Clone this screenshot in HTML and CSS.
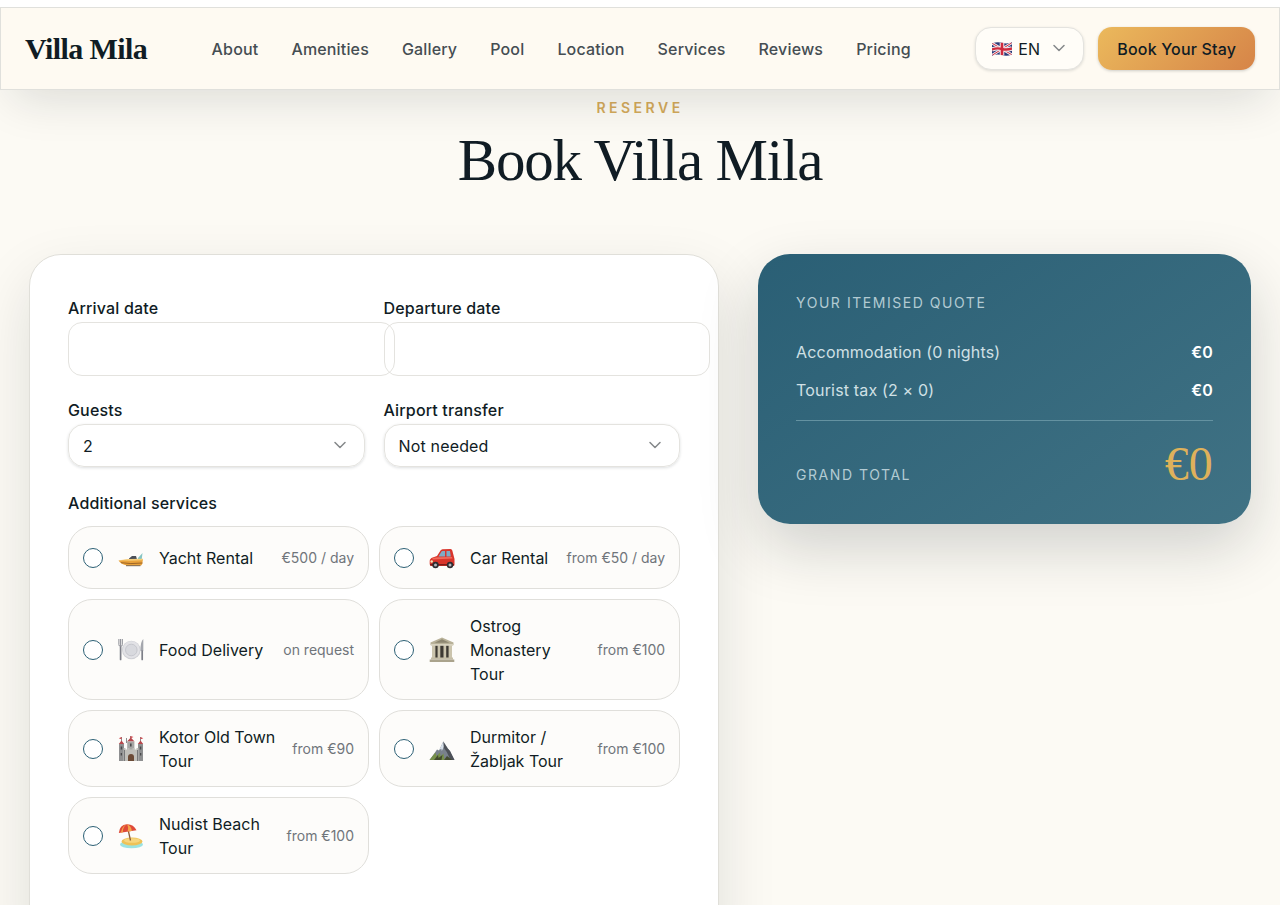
FILE: index.html
```html
<!DOCTYPE html>
<html lang="en">
<head>
  <meta charset="UTF-8">
  <meta name="viewport" content="width=device-width, initial-scale=1.0">
  <title>Book Villa Mila</title>
  <link rel="stylesheet" href="styles.css">
</head>
<body>

  <header class="topbar">
    <a class="logo" href="#">Villa Mila</a>
    <nav class="nav" aria-label="Main">
      <a href="#about">About</a>
      <a href="#amenities">Amenities</a>
      <a href="#gallery">Gallery</a>
      <a href="#pool">Pool</a>
      <a href="#location">Location</a>
      <a href="#services">Services</a>
      <a href="#reviews">Reviews</a>
      <a href="#pricing">Pricing</a>
    </nav>
    <div class="actions">
      <div class="lang">
        <svg class="flag" viewBox="0 0 20 14" aria-hidden="true">
          <path fill="#2b3a78" d="M0 1.5Q5-.6 10 .8T20 .3V12.500Q15 14.500 10 13.100T0 13.700Z"/>
          <path stroke="#f3eef0" stroke-width="2.600" d="M.5 1.500 19.500 12.500M19.500 1 .5 13"/>
          <path stroke="#cf2b3e" stroke-width="1" d="M.5 1.500 19.500 12.500M19.500 1 .5 13"/>
          <path stroke="#f3eef0" stroke-width="4.600" d="M10 .8V13.100"/>
          <path fill="none" stroke="#f3eef0" stroke-width="4.400" d="M0 7.500Q5 5.600 10 7T20 6.400"/>
          <path stroke="#cf2b3e" stroke-width="2.600" d="M10 .8V13.100"/>
          <path fill="none" stroke="#cf2b3e" stroke-width="2.400" d="M0 7.500Q5 5.600 10 7T20 6.400"/>
        </svg>
        <select id="lang" aria-label="Language">
          <option>EN</option>
        </select>
        <svg class="chevron" viewBox="0 0 12 12" aria-hidden="true"><path d="M1 3.500 6 8.500 11 3.500"/></svg>
      </div>
      <button type="button" class="book">Book Your Stay</button>
    </div>
  </header>

  <main>
    <div class="heading">
      <p class="eyebrow">Reserve</p>
      <h1>Book Villa Mila</h1>
    </div>

    <div class="booking">
      <form class="form-card">
        <div class="fields">
          <div class="field">
            <label for="arrival">Arrival date</label>
            <input type="text" id="arrival" class="date">
          </div>
          <div class="field">
            <label for="departure">Departure date</label>
            <input type="text" id="departure" class="date">
          </div>
          <div class="field">
            <label for="guests">Guests</label>
            <div class="select">
              <select id="guests">
                <option>2</option>
              </select>
              <svg class="chevron" viewBox="0 0 12 12" aria-hidden="true"><path d="M1 3.500 6 8.500 11 3.500"/></svg>
            </div>
          </div>
          <div class="field">
            <label for="transfer">Airport transfer</label>
            <div class="select">
              <select id="transfer">
                <option>Not needed</option>
              </select>
              <svg class="chevron" viewBox="0 0 12 12" aria-hidden="true"><path d="M1 3.500 6 8.500 11 3.500"/></svg>
            </div>
          </div>
        </div>

        <fieldset class="services">
          <legend>Additional services</legend>
          <div class="service-grid">
            <label class="service">
              <input type="checkbox" name="yacht">
              <svg class="icon" viewBox="0 0 26 26" aria-hidden="true">
                <path fill="#4c5058" d="M11 13.500 14 11h4l1 3.500h-8z"/>
                <path fill="#86c5c4" d="m20 13 4.500-5-.8 6.500h-4z"/>
                <path fill="#e9a23b" d="M.5 15.500 12 14.300l13-.3-.8 5q-.4 1.500-2 1.500H9Q3 19.500.5 15.500z"/>
                <path fill="#f6cd78" d="M.5 15.300 12 14l13-.2-.2 1.500-12.800.5z"/>
                <path fill="none" stroke="#8a5420" stroke-width=".8" d="M3 17.700q9 1.600 21.500.3"/>
                <path fill="none" stroke="#5c4530" stroke-width=".8" d="M8 20.700h14.500"/>
              </svg>
              <span class="name">Yacht Rental</span>
              <span class="price">€500 / day</span>
            </label>
            <label class="service">
              <input type="checkbox" name="car">
              <svg class="icon" viewBox="0 0 26 26" aria-hidden="true">
                <path fill="#d9352b" d="M8 11 11.500 5.500q.7-1 2-1.200L21.500 4q1.500 0 1.800 1.500L25.500 14v5.500q0 1.500-1.500 1.500H2.500Q.7 21 .7 19v-3q0-2.500 3-3.500z"/>
                <path fill="#7faac4" d="M9.500 11.500 12.500 6.500q.3-.5 1-.5H16v5.500zM17.500 6h3.500l.8 5.500h-4.300z"/>
                <path fill="#f1695a" d="M3.500 13 9 12.200l14-.2.500 1.500-20 1z"/>
                <circle cx="2.700" cy="16.500" r="1.200" fill="#f5e9b8"/>
                <path fill="#7e1c19" d="M1 19h24v1.500H1z"/>
                <circle cx="6.500" cy="20" r="3.200" fill="#2d2d31"/>
                <circle cx="6.500" cy="20" r="1.500" fill="#b4b6bb"/>
                <circle cx="21" cy="20" r="3.200" fill="#2d2d31"/>
                <circle cx="21" cy="20" r="1.500" fill="#b4b6bb"/>
              </svg>
              <span class="name">Car Rental</span>
              <span class="price">from €50 / day</span>
            </label>
            <label class="service">
              <input type="checkbox" name="food">
              <svg class="icon" viewBox="0 0 26 26" aria-hidden="true">
                <circle cx="13.300" cy="13" r="9.300" fill="#cfd0d5"/>
                <circle cx="13.300" cy="12.700" r="8.500" fill="#e2e2e6"/>
                <circle cx="13.300" cy="13" r="5.800" fill="#d8d9de" stroke="#bcbdc4" stroke-width=".7"/>
                <path fill="none" stroke="#898b93" stroke-width="1" d="M.9 2v5.500q0 2 1.700 2t1.700-2V2M2.600 2v8"/>
                <path stroke="#7d7f88" stroke-width="1.700" stroke-linecap="round" d="M2.600 10.500V22.500"/>
                <path fill="#a4a6ad" d="M25.300 2q-3 2.500-2.800 12h2.800z"/>
                <path stroke="#7d7f88" stroke-width="1.700" stroke-linecap="round" d="M24.200 14v8.500"/>
              </svg>
              <span class="name">Food Delivery</span>
              <span class="price">on request</span>
            </label>
            <label class="service">
              <input type="checkbox" name="ostrog">
              <svg class="icon" viewBox="0 0 26 26" aria-hidden="true">
                <path fill="#b8b198" d="M1.500 5.500 13 .5l11.500 5v2.500h-23z"/>
                <path fill="#8d8670" d="M5.500 5.700 13 2.300l7.500 3.400z"/>
                <path fill="#3d3932" d="M4 8h18v13H4z"/>
                <path fill="#cbc4ad" d="M3 8h3.400v13H3zM8.600 8h2.700v13H8.600zM14.500 8h2.700v13h-2.700zM19.600 8H23v13h-3.400z"/>
                <path fill="#d8d2bf" d="M1.800 7h22.400v1.800H1.800z"/>
                <path fill="#c4bda6" d="M2 20.500h22v2H2z"/>
                <path fill="#aaa38c" d="M.7 22.500h24.600V25H.7z"/>
              </svg>
              <span class="name">Ostrog Monastery Tour</span>
              <span class="price">from €100</span>
            </label>
            <label class="service">
              <input type="checkbox" name="kotor">
              <svg class="icon" viewBox="0 0 26 26" aria-hidden="true">
                <path stroke="#5d5d60" stroke-width=".7" d="M3.500 1v6M8.500 2v5M12.500 0v5M22.500 1v6"/>
                <path fill="#cf3f45" d="M3.500 1 .8 2.300l2.700 1zM12.500 0l3 1-3 1.200zM22.500 1l2.800 1.300-2.800 1z"/>
                <path fill="#b7474c" d="m.8 8 2.700-3.500L6.200 8zM9 5.500 12.800 1.500 16.500 5.500zM19.800 8l2.700-3.500L25.200 8z"/>
                <path fill="#a6a6a4" d="M9.200 5.500h7.200V16H9.200z"/>
                <path fill="#8e8f90" d="M1 8h5v17H1zM20 8h5v17h-5z"/>
                <path fill="#c0bfba" d="M5.500 12h2v1.500h2V12h2v1.500h3V12h2v1.500h2V12h2v13h-15z"/>
                <path fill="#4a4a4c" d="M2.700 10.500h1.500v3H2.700zM21.800 10.500h1.500v3h-1.500zM12 7.500h1.600v3H12zM2.700 17h1.300v2.500H2.700zM22 17h1.300v2.500H22z"/>
                <path fill="#6b4a36" d="M10 25v-4q0-3 3-3t3 3v4z"/>
                <path fill="#77787a" d="M6 14h1v11H6zM19 14h1v11h-1z"/>
              </svg>
              <span class="name">Kotor Old Town Tour</span>
              <span class="price">from €90</span>
            </label>
            <label class="service">
              <input type="checkbox" name="durmitor">
              <svg class="icon" viewBox="0 0 26 26" aria-hidden="true">
                <path fill="#79818c" d="M.5 24 6 16.500l2-3 2 1L14.300 5.500l4.500 7 2.200 2.500 4.500 9z"/>
                <path fill="#d7e0ea" d="m14.300 5.500-4 8.500 2-1.300.5 2.300 2-4 1.700 3 .8-1.500 2.500 2z"/>
                <path fill="#4d5158" d="m14.300 5.500.5 6.500 3 4 3.700 8h4L21 15l-2.200-2.500z"/>
                <path fill="#76904a" d="M.5 24 6.500 16.500l1 3.500 3.500-3.500.5 4 3-3 1 6.500z"/>
                <path fill="#434b2e" d="m5 24 4-5 .5 3 4-3-1 5zM15 24l3-4 5 4z"/>
              </svg>
              <span class="name">Durmitor / Žabljak Tour</span>
              <span class="price">from €100</span>
            </label>
            <label class="service">
              <input type="checkbox" name="beach">
              <svg class="icon" viewBox="0 0 26 26" aria-hidden="true">
                <ellipse cx="13.500" cy="21.500" rx="11.500" ry="3.800" fill="#9be3e2"/>
                <ellipse cx="14" cy="18.500" rx="10.500" ry="4" fill="#eec257"/>
                <ellipse cx="14" cy="17.500" rx="8" ry="2.300" fill="#f6d67f"/>
                <path stroke="#8f5c35" stroke-width="1.300" d="m9.500 4 3 13.500"/>
                <path fill="#df4a38" d="M.8 10Q1.500 2 8.800 1.300 15.500 1 18.500 7.300z"/>
                <path fill="#f3a54a" d="M4.800 9.300Q5 3.500 8.800 1.300q-4.500 1.200-6 8.400z"/>
                <path fill="#f3a54a" d="M9.500 8.600Q11 4 8.800 1.300 13.500 3 13.800 8z"/>
              </svg>
              <span class="name">Nudist Beach Tour</span>
              <span class="price">from €100</span>
            </label>
          </div>
        </fieldset>
      </form>

      <aside class="quote">
        <h2>Your itemised quote</h2>
        <dl>
          <div class="line">
            <dt>Accommodation (0 nights)</dt>
            <dd>€0</dd>
          </div>
          <div class="line">
            <dt>Tourist tax (2 × 0)</dt>
            <dd>€0</dd>
          </div>
          <div class="total">
            <dt>Grand total</dt>
            <dd>€0</dd>
          </div>
        </dl>
      </aside>
    </div>
  </main>

</body>
</html>
```
FILE: styles.css
```css
* {
  box-sizing: border-box;
}

body {
  margin: 0;
  border-top: 7px solid #fff;
  font-family: Inter, "Liberation Sans", sans-serif;
  font-size: 16px;
  line-height: 24px;
  letter-spacing: 0.01em;
  color: #101c24;
  background-color: #fcfaf4;
}

button, input, select {
  font: inherit;
  letter-spacing: inherit;
  color: inherit;
}

/* Header */
.topbar {
  position: sticky;
  top: 0;
  z-index: 10;
  display: flex;
  align-items: center;
  justify-content: space-between;
  height: 83px;
  padding: 0 24px;
  background-color: #fefaf2;
  border: 1px solid #e0e0dc;
  box-shadow: 0 20px 48px -12px rgba(16, 28, 36, 0.14);
}

.logo {
  font-family: "Liberation Serif", serif;
  font-size: 30px;
  font-weight: bold;
  letter-spacing: -0.02em;
  color: #101c24;
  text-decoration: none;
}

.nav {
  display: flex;
  gap: 33px;
}

.nav a {
  font-weight: 500;
  color: #454d52;
  text-decoration: none;
}

.actions {
  display: flex;
  gap: 14px;
}

.lang, .select {
  position: relative;
  border: 1px solid #e4e3df;
  border-radius: 16px;
  box-shadow: 0 1px 3px rgba(16, 28, 36, 0.14);
}

.lang {
  background-color: #fffdf8;
}

.lang select, .select select {
  display: block;
  width: 100%;
  height: 41px;
  padding: 0 40px 0 14px;
  appearance: none;
  background: none;
  border: none;
  border-radius: 16px;
}

.lang select {
  width: 107px;
  padding-left: 42px;
}

.flag {
  position: absolute;
  left: 16px;
  top: 14px;
  width: 20px;
  height: 14px;
}

.chevron {
  position: absolute;
  right: 18px;
  top: 14px;
  width: 12px;
  height: 12px;
  fill: none;
  stroke: #85888a;
  stroke-width: 1.5;
  stroke-linecap: round;
  stroke-linejoin: round;
  pointer-events: none;
}

.book {
  height: 43px;
  padding: 0 19px;
  font-weight: 500;
  border: none;
  border-radius: 14px;
  background: linear-gradient(135deg, #ebb95c, #d68448);
  box-shadow: 0 1px 3px rgba(16, 28, 36, 0.2);
  cursor: pointer;
}

/* Heading */
.heading {
  padding: 8px 30px 57px;
  text-align: center;
}

.eyebrow {
  margin: 0;
  font-size: 14px;
  line-height: 20px;
  font-weight: 600;
  letter-spacing: 0.25em;
  text-transform: uppercase;
  color: #d4a95a;
}

h1 {
  margin: 5px 0 0;
  font-family: "Liberation Serif", serif;
  font-size: 59px;
  line-height: 74px;
  font-weight: normal;
  letter-spacing: -0.02em;
}

/* Booking */
.booking {
  display: grid;
  grid-template-columns: 1.4fr 1fr;
  gap: 39px;
  align-items: start;
  padding: 0 29px 40px;
}

.form-card {
  padding: 41px 38px 80px;
  background-color: #fff;
  border: 1px solid #e0dfd9;
  border-radius: 32px;
  box-shadow: 0 24px 60px rgba(16, 28, 36, 0.12);
}

.fields {
  display: grid;
  grid-template-columns: 1fr 1fr;
  gap: 22px 19px;
}

.field label, .services legend {
  display: block;
  padding: 0 0 2px;
  font-weight: 500;
}

.date {
  display: block;
  width: calc(100% + 30px);
  height: 54px;
  padding: 0 15px;
  border: 1px solid #e4e3df;
  border-radius: 14px;
  background: none;
}

.services {
  min-width: 0;
  margin: 24px 0 0;
  padding: 0;
  border: none;
}

.services legend {
  padding-bottom: 11px;
}

.service-grid {
  display: grid;
  grid-template-columns: 1fr 1fr;
  gap: 10px;
}

.service {
  display: flex;
  align-items: center;
  gap: 15px;
  min-height: 63px;
  padding: 14px 14px 13px;
  letter-spacing: 0;
  background-color: #fdfcfa;
  border: 1px solid #e0dfdb;
  border-radius: 24px;
  cursor: pointer;
}

.service input {
  flex: none;
  width: 20px;
  height: 20px;
  margin: 0;
  appearance: none;
  background-color: #fff;
  border: 1px solid #2c6075;
  border-radius: 50%;
}

.service input:checked {
  background-color: #2c6075;
}

.icon {
  flex: none;
  width: 26px;
  height: 26px;
}

.name {
  flex: 1;
}

.price {
  font-size: 14px;
  color: #70757a;
  white-space: nowrap;
}

/* Quote */
.quote {
  padding: 37px 38px 30px;
  color: #fff;
  background: linear-gradient(145deg, #2a5f75, #407284);
  border-radius: 32px;
  box-shadow: 0 24px 60px rgba(16, 28, 36, 0.18);
}

.quote h2, .total dt {
  margin: 0;
  font-size: 14px;
  font-weight: normal;
  letter-spacing: 0.11em;
  text-transform: uppercase;
  color: #b3cbd3;
}

.quote dl {
  margin: 18px 0 0;
}

.quote dd {
  margin: 0;
  font-weight: 600;
}

.line {
  display: flex;
  justify-content: space-between;
  padding: 7px 0;
}

.line dt {
  color: #d0e0e5;
}

.total {
  display: flex;
  align-items: baseline;
  justify-content: space-between;
  margin-top: 11px;
  padding-top: 13px;
  border-top: 1px solid #6492a1;
}

.quote .total dd {
  font-family: "Liberation Serif", serif;
  font-size: 48px;
  line-height: 60px;
  font-weight: normal;
  color: #deb15b;
}

@media (max-width: 900px) {
  .topbar {
    height: auto;
    padding: 16px 24px;
    flex-wrap: wrap;
    gap: 16px;
  }

  .nav {
    flex-wrap: wrap;
    gap: 12px 20px;
  }

  .booking {
    grid-template-columns: 1fr;
  }
}
```
